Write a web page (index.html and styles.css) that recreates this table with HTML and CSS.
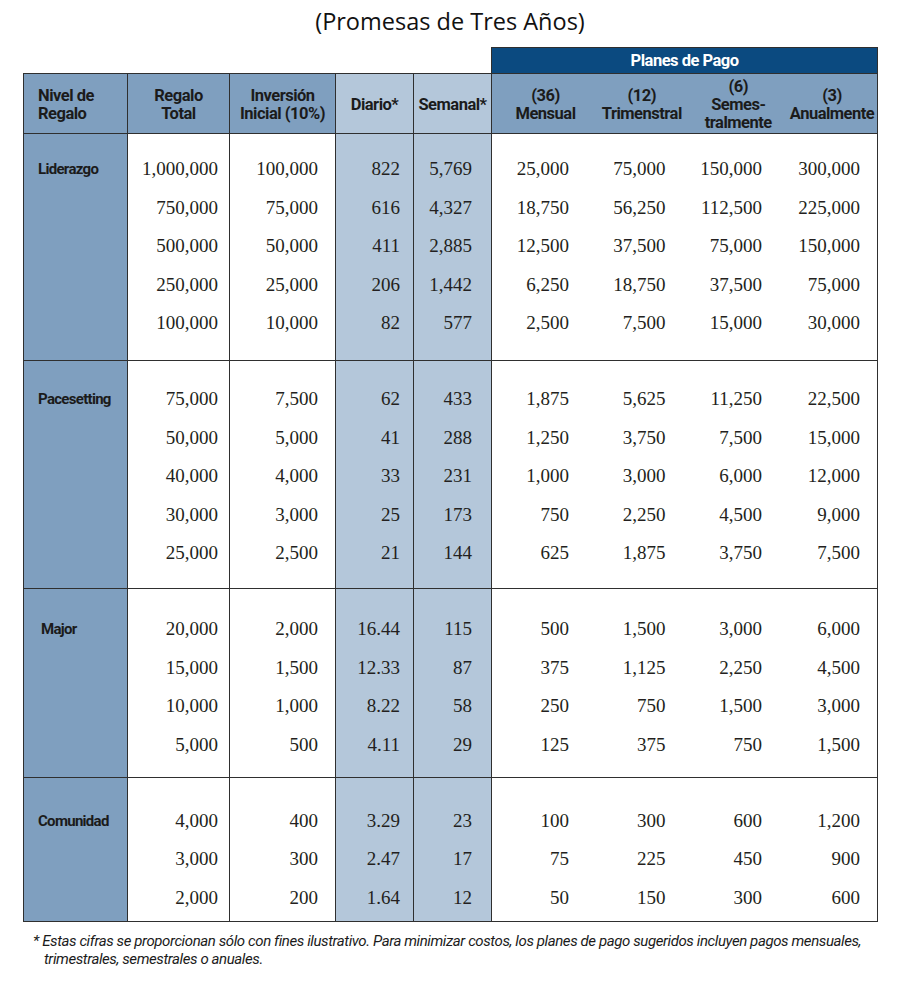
FILE: index.html
```html
<!DOCTYPE html>
<html lang="es">
<head>
<meta charset="utf-8">
<title>Promesas de Tres Años</title>
<link rel="stylesheet" href="styles.css">
</head>
<body>
<h1 class="title">(Promesas de Tres Años)</h1>
<table class="pledge">
  <colgroup>
    <col class="c-level"><col class="c-total"><col class="c-init"><col class="c-day"><col class="c-week">
    <col class="c-plan"><col class="c-plan"><col class="c-plan"><col class="c-plan">
  </colgroup>
  <thead>
    <tr class="plans-row">
      <th class="blank" colspan="5"></th>
      <th class="plans" colspan="4">Planes de Pago</th>
    </tr>
    <tr class="head">
      <th class="h-level">Nivel de<br>Regalo</th>
      <th>Regalo<br>Total</th>
      <th>Inversión<br>Inicial (10%)</th>
      <th class="lt">Diario*</th>
      <th class="lt">Semanal*</th>
      <th class="p">(36)<br>Mensual</th>
      <th class="p">(12)<br>Trimenstral</th>
      <th class="p">(6)<br>Semes-<br>tralmente</th>
      <th class="p last">(3)<br>Anualmente</th>
    </tr>
  </thead>
  <tbody class="g1">
    <tr><td class="label" rowspan="5">Liderazgo</td><td>1,000,000</td><td class="ini">100,000</td><td class="lt d">822</td><td class="lt w">5,769</td><td class="p">25,000</td><td class="p">75,000</td><td class="p">150,000</td><td class="p last">300,000</td></tr>
    <tr><td>750,000</td><td class="ini">75,000</td><td class="lt d">616</td><td class="lt w">4,327</td><td class="p">18,750</td><td class="p">56,250</td><td class="p">112,500</td><td class="p last">225,000</td></tr>
    <tr><td>500,000</td><td class="ini">50,000</td><td class="lt d">411</td><td class="lt w">2,885</td><td class="p">12,500</td><td class="p">37,500</td><td class="p">75,000</td><td class="p last">150,000</td></tr>
    <tr><td>250,000</td><td class="ini">25,000</td><td class="lt d">206</td><td class="lt w">1,442</td><td class="p">6,250</td><td class="p">18,750</td><td class="p">37,500</td><td class="p last">75,000</td></tr>
    <tr><td>100,000</td><td class="ini">10,000</td><td class="lt d">82</td><td class="lt w">577</td><td class="p">2,500</td><td class="p">7,500</td><td class="p">15,000</td><td class="p last">30,000</td></tr>
  </tbody>
  <tbody class="g2">
    <tr><td class="label" rowspan="5">Pacesetting</td><td>75,000</td><td class="ini">7,500</td><td class="lt d">62</td><td class="lt w">433</td><td class="p">1,875</td><td class="p">5,625</td><td class="p">11,250</td><td class="p last">22,500</td></tr>
    <tr><td>50,000</td><td class="ini">5,000</td><td class="lt d">41</td><td class="lt w">288</td><td class="p">1,250</td><td class="p">3,750</td><td class="p">7,500</td><td class="p last">15,000</td></tr>
    <tr><td>40,000</td><td class="ini">4,000</td><td class="lt d">33</td><td class="lt w">231</td><td class="p">1,000</td><td class="p">3,000</td><td class="p">6,000</td><td class="p last">12,000</td></tr>
    <tr><td>30,000</td><td class="ini">3,000</td><td class="lt d">25</td><td class="lt w">173</td><td class="p">750</td><td class="p">2,250</td><td class="p">4,500</td><td class="p last">9,000</td></tr>
    <tr><td>25,000</td><td class="ini">2,500</td><td class="lt d">21</td><td class="lt w">144</td><td class="p">625</td><td class="p">1,875</td><td class="p">3,750</td><td class="p last">7,500</td></tr>
  </tbody>
  <tbody class="g3">
    <tr><td class="label indent" rowspan="4">Major</td><td>20,000</td><td class="ini">2,000</td><td class="lt d">16.44</td><td class="lt w">115</td><td class="p">500</td><td class="p">1,500</td><td class="p">3,000</td><td class="p last">6,000</td></tr>
    <tr><td>15,000</td><td class="ini">1,500</td><td class="lt d">12.33</td><td class="lt w">87</td><td class="p">375</td><td class="p">1,125</td><td class="p">2,250</td><td class="p last">4,500</td></tr>
    <tr><td>10,000</td><td class="ini">1,000</td><td class="lt d">8.22</td><td class="lt w">58</td><td class="p">250</td><td class="p">750</td><td class="p">1,500</td><td class="p last">3,000</td></tr>
    <tr><td>5,000</td><td class="ini">500</td><td class="lt d">4.11</td><td class="lt w">29</td><td class="p">125</td><td class="p">375</td><td class="p">750</td><td class="p last">1,500</td></tr>
  </tbody>
  <tbody class="g4">
    <tr><td class="label" rowspan="3">Comunidad</td><td>4,000</td><td class="ini">400</td><td class="lt d">3.29</td><td class="lt w">23</td><td class="p">100</td><td class="p">300</td><td class="p">600</td><td class="p last">1,200</td></tr>
    <tr><td>3,000</td><td class="ini">300</td><td class="lt d">2.47</td><td class="lt w">17</td><td class="p">75</td><td class="p">225</td><td class="p">450</td><td class="p last">900</td></tr>
    <tr><td>2,000</td><td class="ini">200</td><td class="lt d">1.64</td><td class="lt w">12</td><td class="p">50</td><td class="p">150</td><td class="p">300</td><td class="p last">600</td></tr>
  </tbody>
</table>
<p class="note"><span class="star">*</span> Estas cifras se proporcionan sólo con fines ilustrativo. Para minimizar costos, los planes de pago sugeridos incluyen pagos mensuales,<br><span class="cont">trimestrales, semestrales o anuales.</span></p>
</body>
</html>
```

FILE: styles.css
```css
html, body {
  margin: 0;
  padding: 0;
  background: #ffffff;
}
body {
  font-family: "Liberation Serif", "Times New Roman", serif;
  color: #231f20;
  width: 900px;
}
.title {
  margin: 0;
  height: 47px;
  text-align: center;
  font-family: "Open Sans", "Liberation Sans", sans-serif;
  font-weight: 400;
  font-size: 23.5px;
  line-height: 42px;
  color: #111;
}
.pledge {
  margin-left: 23px;
  border-collapse: collapse;
  table-layout: fixed;
  width: 855px;
}
.c-level { width: 104px; }
.c-total { width: 102px; }
.c-init { width: 106px; }
.c-day { width: 78px; }
.c-week { width: 78px; }
.c-plan { width: 96.5px; }

.pledge th {
  font-family: Roboto, "Liberation Sans", sans-serif;
  font-weight: 700;
  font-size: 16.5px;
  letter-spacing: -0.5px;
  line-height: 18px;
  color: #1b1b1b;
  padding: 0;
  white-space: nowrap;
}
.plans-row th {
  height: 25px;
  line-height: 17px;
}
.pledge .blank {
  background: #fff;
  border: none;
}
.pledge .plans {
  background: #0b4a80;
  color: #ffffff;
  border: 1.5px solid #2f2f2f;
  text-align: center;
}
.head th {
  height: 56px;
  padding-top: 3px;
  background: #7f9fbf;
  border: 1.5px solid #2f2f2f;
  text-align: center;
  vertical-align: middle;
}
.head th.h-level {
  text-align: left;
  padding-left: 14px;
}
.head th.lt {
  background: #b4c7da;
}
.head th.p {
  border-left: none;
  border-right: none;
  padding-left: 11px;
}
.head th.p.last {
  border-right: 1.5px solid #2f2f2f;
  padding-left: 6px;
}

.pledge tbody {
  border-top: 1.5px solid #2f2f2f;
  border-bottom: 1.5px solid #2f2f2f;
}
.pledge td {
  font-size: 19px;
  line-height: 22px;
  padding: 8.25px 11px 8.25px 0;
  text-align: right;
  border-left: 1.5px solid #2f2f2f;
  border-right: 1.5px solid #2f2f2f;
  white-space: nowrap;
}
.pledge td.ini { padding-right: 17px; }
.pledge td.d { padding-right: 13px; }
.pledge td.w { padding-right: 19px; }
.pledge td.lt { background: #b4c7da; }
.pledge td.p {
  border-left: none;
  border-right: none;
  padding-right: 19px;
}
.pledge td.p.last {
  border-right: 1.5px solid #2f2f2f;
  padding-right: 17px;
}
.pledge td.label {
  background: #7f9fbf;
  text-align: left;
  vertical-align: top;
  padding: 0 0 0 14px;
  font-family: Roboto, "Liberation Sans", sans-serif;
  font-weight: 700;
  font-size: 15px;
  letter-spacing: -0.7px;
  line-height: 22px;
  color: #1b1b1b;
}
.pledge td.label.indent { padding-left: 17px; }

.g1 tr:first-child td { padding-top: 24px; }
.g1 tr:last-child td { padding-bottom: 26px; }
.g1 td.label { padding-top: 24px; }
.g2 tr:first-child td { padding-top: 27px; }
.g2 tr:last-child td { padding-bottom: 24px; }
.g2 td.label { padding-top: 27px; }
.g3 tr:first-child td { padding-top: 29px; }
.g3 tr:last-child td { padding-bottom: 21px; }
.g3 td.label { padding-top: 29px; }
.g4 tr:first-child td { padding-top: 32px; }
.g4 tr:last-child td { padding-bottom: 12px; }
.g4 td.label { padding-top: 32px; }

.note {
  margin: 10px 0 0 33px;
  font-family: Roboto, "Liberation Sans", sans-serif;
  font-style: italic;
  font-size: 15px;
  letter-spacing: -0.4px;
  line-height: 18px;
  color: #1b1b1b;
  white-space: nowrap;
}
.note .cont {
  padding-left: 11px;
}
```
